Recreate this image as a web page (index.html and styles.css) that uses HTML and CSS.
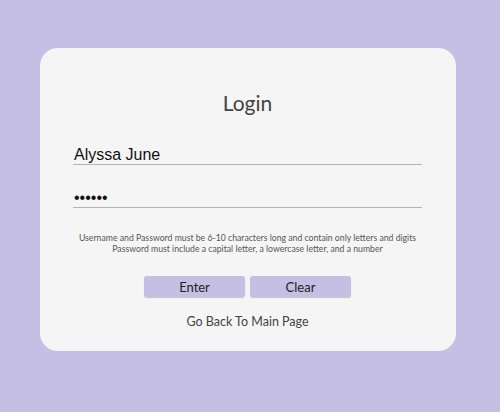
FILE: index.html
```html
<!DOCTYPE html>
<html>
<head>
<meta charset="utf-8">
<link rel="stylesheet" href="styles.css">
</head>
<body>
<div class="card">
  <h1 class="title">Login</h1>
  <div class="field"><input class="input" type="text" value="Alyssa June"></div>
  <div class="field pw"><input class="input" type="password" value="abcdef"></div>
  <p class="hint">Username and Password must be 6-10 characters long and contain only letters and digits<br>Password must include a capital letter, a lowercase letter, and a number</p>
  <div class="buttons">
    <button class="btn">Enter</button>
    <button class="btn">Clear</button>
  </div>
  <a class="back">Go Back To Main Page</a>
</div>
</body>
</html>
```
FILE: styles.css
```css
html, body { margin: 0; padding: 0; }
body {
  background: #c5bfe3;
  width: 500px;
  height: 412px;
  padding-top: 48px;
  box-sizing: border-box;
  font-family: Lato, "Open Sans", sans-serif;
}
.card {
  margin-left: 40px;
  width: 416px;
  height: 303px;
  background: #f5f5f5;
  border-radius: 18px;
  box-sizing: border-box;
  padding: 42px 34px 0 33px;
  display: flex;
  flex-direction: column;
  align-items: center;
}
.title {
  margin: 0;
  font-weight: 400;
  font-size: 21px;
  line-height: 26px;
  color: #444;
}
.field {
  width: 349px;
  margin-top: 22px;
}
.field.pw { margin-top: 16px; }
.input {
  width: 100%;
  box-sizing: border-box;
  border: none;
  border-bottom: 1px solid #b5b5b5;
  background: transparent;
  font-family: "Liberation Sans", Arial, sans-serif;
  font-size: 16px;
  line-height: 18px;
  color: #111;
  padding: 8px 0 0 1px;
  height: 27px;
  outline: none;
}
.hint {
  margin: 24px -20px 0;
  white-space: nowrap;
  text-align: center;
  font-size: 8.7px;
  line-height: 11px;
  color: #555;
}
.buttons {
  display: flex;
  gap: 5px;
  margin-top: 22px;
}
.btn {
  width: 101px;
  height: 21px;
  border: none;
  border-radius: 3px;
  background: #c5bfe3;
  box-shadow: 0 1px 1px rgba(0,0,0,0.2);
  font-family: Lato, "Open Sans", sans-serif;
  font-size: 13px;
  color: #222;
  padding: 0;
}
.back {
  margin-top: 17px;
  font-size: 12.5px;
  color: #444;
}
```
